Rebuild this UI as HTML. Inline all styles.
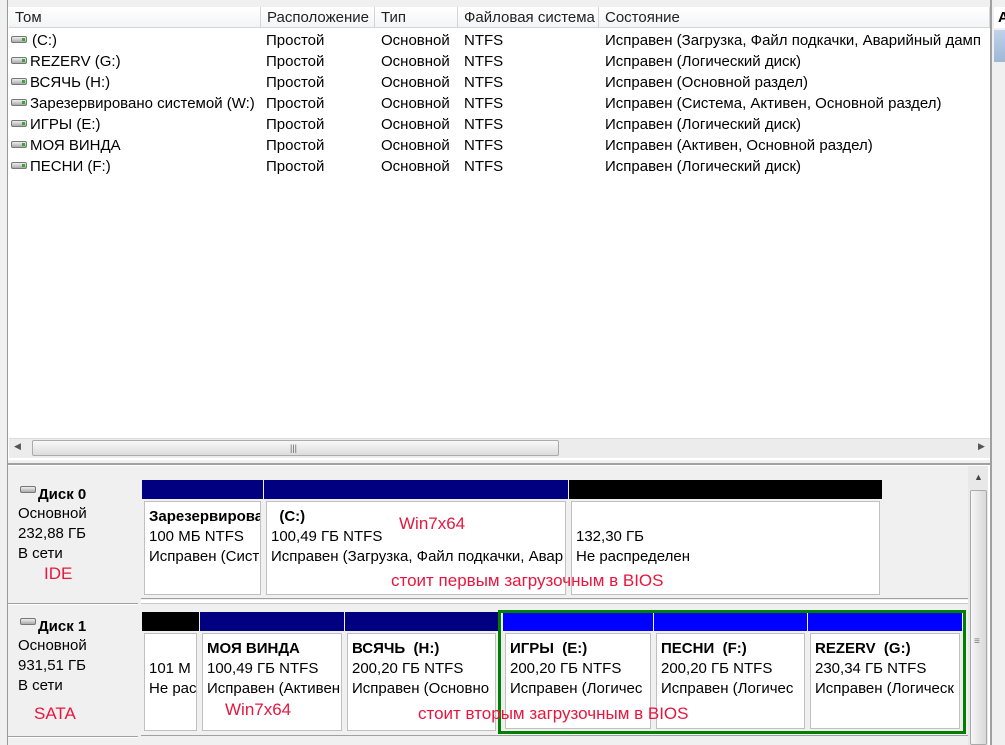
<!DOCTYPE html>
<html><head><meta charset="utf-8"><style>
*{margin:0;padding:0;box-sizing:border-box}
body{width:1005px;height:745px;overflow:hidden;background:#fff;font-family:"Liberation Sans",sans-serif;font-size:15px;color:#000;position:relative}
.a{position:absolute;white-space:nowrap}
.hd{position:absolute;top:7px;height:21px;background:linear-gradient(#fff,#f3f4f6);border-right:1px solid #d5d5d5;border-bottom:1px solid #d5d5d5;padding:2px 6px;font-size:15px;color:#222;white-space:nowrap;overflow:hidden}
.row{position:absolute;left:10px;height:21px;font-size:15px}
.row span{position:absolute;top:2px;white-space:nowrap}
.ic{position:absolute;left:1px;top:6px;width:16px;height:7px;border:1px solid #777;border-radius:2px;background:linear-gradient(#eee,#aaa)}
.ic:after{content:"";position:absolute;right:1px;top:1px;width:3px;height:3px;background:#3a3}
.p{position:absolute;background:#f0f0f0}
.bar{position:absolute;left:0;right:0;top:0;height:19px}
.bd{position:absolute;left:2px;right:2px;top:21px;bottom:2px;border:1px solid #c0c0c0;background:#fff;padding:5px 4px 0;overflow:hidden;white-space:nowrap;line-height:20px;font-size:15px}
.bd b{font-weight:bold}
.red{position:absolute;color:#e8163e;font-size:17px;white-space:nowrap}
.dl{position:absolute;left:18px;font-size:15px;line-height:20px}
</style></head><body>
<div class="a" style="left:0;top:0;width:8px;height:745px;background:#f0f0f0;border-right:1px solid #999"></div>
<div class="a" style="left:8px;top:0;width:985px;height:7px;background:#f0f0f0"></div>
<div class="a" style="left:990px;top:0;width:15px;height:745px;background:#f0f0f0;border-left:2px solid #a0a0a0"></div>
<div class="a" style="left:994px;top:7px;width:11px;height:21px;background:#fff;font-weight:bold;padding:2px 0 0 4px">A</div>
<div class="a" style="left:994px;top:30px;width:11px;height:32px;background:linear-gradient(#bfd3ea,#9fb8d6)"></div>
<div class="hd" style="left:9px;width:252px">Том</div>
<div class="hd" style="left:261px;width:114px">Расположение</div>
<div class="hd" style="left:375px;width:83px">Тип</div>
<div class="hd" style="left:458px;width:141px">Файловая система</div>
<div class="hd" style="left:599px;width:391px">Состояние</div>

<div class="row" style="top:30px"><i class="ic"></i><span style="left:22px">(C:)</span><span style="left:256px">Простой</span><span style="left:371px">Основной</span><span style="left:454px">NTFS</span><span style="left:595px">Исправен (Загрузка, Файл подкачки, Аварийный дамп</span></div>
<div class="row" style="top:51px"><i class="ic"></i><span style="left:20px">REZERV (G:)</span><span style="left:256px">Простой</span><span style="left:371px">Основной</span><span style="left:454px">NTFS</span><span style="left:595px">Исправен (Логический диск)</span></div>
<div class="row" style="top:72px"><i class="ic"></i><span style="left:20px">ВСЯЧЬ (H:)</span><span style="left:256px">Простой</span><span style="left:371px">Основной</span><span style="left:454px">NTFS</span><span style="left:595px">Исправен (Основной раздел)</span></div>
<div class="row" style="top:93px"><i class="ic"></i><span style="left:20px">Зарезервировано системой (W:)</span><span style="left:256px">Простой</span><span style="left:371px">Основной</span><span style="left:454px">NTFS</span><span style="left:595px">Исправен (Система, Активен, Основной раздел)</span></div>
<div class="row" style="top:114px"><i class="ic"></i><span style="left:20px">ИГРЫ (E:)</span><span style="left:256px">Простой</span><span style="left:371px">Основной</span><span style="left:454px">NTFS</span><span style="left:595px">Исправен (Логический диск)</span></div>
<div class="row" style="top:135px"><i class="ic"></i><span style="left:20px">МОЯ ВИНДА</span><span style="left:256px">Простой</span><span style="left:371px">Основной</span><span style="left:454px">NTFS</span><span style="left:595px">Исправен (Активен, Основной раздел)</span></div>
<div class="row" style="top:156px"><i class="ic"></i><span style="left:20px">ПЕСНИ (F:)</span><span style="left:256px">Простой</span><span style="left:371px">Основной</span><span style="left:454px">NTFS</span><span style="left:595px">Исправен (Логический диск)</span></div>

<div class="a" style="left:9px;top:438px;width:981px;height:20px;background:#ececec;border-top:1px solid #ddd"></div>
<div class="a" style="left:14px;top:441px;font-size:9px;color:#555">◀</div>
<div class="a" style="left:978px;top:441px;font-size:9px;color:#555">▶</div>
<div class="a" style="left:32px;top:440px;width:527px;height:16px;border:1px solid #aaa;border-radius:2px;background:linear-gradient(#f8f8f8,#dcdcdc)"></div>
<div class="a" style="left:290px;top:443px;font-size:9px;color:#666">|||</div>
<div class="a" style="left:8px;top:459px;width:982px;height:6px;background:#f0f0f0;border-top:1px solid #fff;border-bottom:2px solid #a0a0a0"></div>

<div class="a" style="left:8px;top:466px;width:960px;height:279px;background:#f0f0f0"></div>
<div class="a" style="left:968px;top:466px;width:20px;height:279px;background:#e8e8e8"></div>
<div class="a" style="left:974px;top:472px;font-size:9px;color:#444">▲</div>
<div class="a" style="left:970px;top:490px;width:17px;height:255px;border:1px solid #aaa;border-radius:2px;background:linear-gradient(90deg,#f6f6f6,#d8d8d8)"></div>
<div class="a" style="left:974px;top:636px;font-size:10px;color:#777">≡</div>

<div class="a" style="left:8px;top:603px;width:130px;height:2px;border-top:1px solid #a0a0a0;background:#fff"></div>
<div class="a" style="left:8px;top:736px;width:130px;height:2px;border-top:1px solid #a0a0a0;background:#fff"></div>
<div class="a" style="left:141px;top:598px;width:827px;height:1px;background:#a0a0a0"></div>
<div class="a" style="left:141px;top:600px;width:827px;height:4px;background:#fff;border-bottom:1px solid #c8c8c8"></div>
<div class="a" style="left:141px;top:735px;width:827px;height:1px;background:#a0a0a0"></div>

<div class="a" style="left:20px;top:486px;width:16px;height:7px;border:1px solid #777;border-radius:2px;background:linear-gradient(#eee,#aaa)"></div>
<div class="a" style="left:38px;top:486px;font-weight:bold;font-size:15px">Диск 0</div>
<div class="dl" style="top:504px">Основной<br>232,88 ГБ<br>В сети</div>
<div class="red" style="left:44px;top:564px">IDE</div>
<div class="a" style="left:20px;top:618px;width:16px;height:7px;border:1px solid #777;border-radius:2px;background:linear-gradient(#eee,#aaa)"></div>
<div class="a" style="left:38px;top:618px;font-weight:bold;font-size:15px">Диск 1</div>
<div class="dl" style="top:636px">Основной<br>931,51 ГБ<br>В сети</div>
<div class="red" style="left:34px;top:704px">SATA</div>

<div class="p" style="left:142px;top:480px;width:121px;height:117px"><div class="bar" style="background:#000080"></div><div class="bd"><b>Зарезервирова</b><br>100 МБ NTFS<br>Исправен (Сист</div></div>
<div class="p" style="left:264px;top:480px;width:304px;height:117px"><div class="bar" style="background:#000080"></div><div class="bd"><b>&nbsp;&nbsp;(C:)</b><br>100,49 ГБ NTFS<br>Исправен (Загрузка, Файл подкачки, Авар</div></div>
<div class="p" style="left:569px;top:480px;width:313px;height:117px"><div class="bar" style="background:#000"></div><div class="bd"><br>132,30 ГБ<br>Не распределен</div></div>
<div class="red" style="left:399px;top:514px">Win7x64</div>
<div class="red" style="left:391px;top:571px">стоит первым загрузочным в BIOS</div>

<div class="p" style="left:142px;top:612px;width:57px;height:121px"><div class="bar" style="background:#000"></div><div class="bd"><br>101 М<br>Не рас</div></div>
<div class="p" style="left:200px;top:612px;width:144px;height:121px"><div class="bar" style="background:#000080"></div><div class="bd"><b>МОЯ ВИНДА</b><br>100,49 ГБ NTFS<br>Исправен (Активен</div></div>
<div class="p" style="left:345px;top:612px;width:153px;height:121px"><div class="bar" style="background:#000080"></div><div class="bd"><b>ВСЯЧЬ&nbsp; (H:)</b><br>200,20 ГБ NTFS<br>Исправен (Основно</div></div>
<div class="p" style="left:503px;top:612px;width:150px;height:119px"><div class="bar" style="background:#0000ff"></div><div class="bd"><b>ИГРЫ&nbsp; (E:)</b><br>200,20 ГБ NTFS<br>Исправен (Логичес</div></div>
<div class="p" style="left:654px;top:612px;width:153px;height:119px"><div class="bar" style="background:#0000ff"></div><div class="bd"><b>ПЕСНИ&nbsp; (F:)</b><br>200,20 ГБ NTFS<br>Исправен (Логичес</div></div>
<div class="p" style="left:808px;top:612px;width:154px;height:119px"><div class="bar" style="background:#0000ff"></div><div class="bd"><b>REZERV&nbsp; (G:)</b><br>230,34 ГБ NTFS<br>Исправен (Логическ</div></div>
<div class="a" style="left:498px;top:610px;width:468px;height:124px;border:3px solid #008000"></div>
<div class="red" style="left:225px;top:700px">Win7x64</div>
<div class="red" style="left:418px;top:704px">стоит вторым загрузочным в BIOS</div>
</body></html>
